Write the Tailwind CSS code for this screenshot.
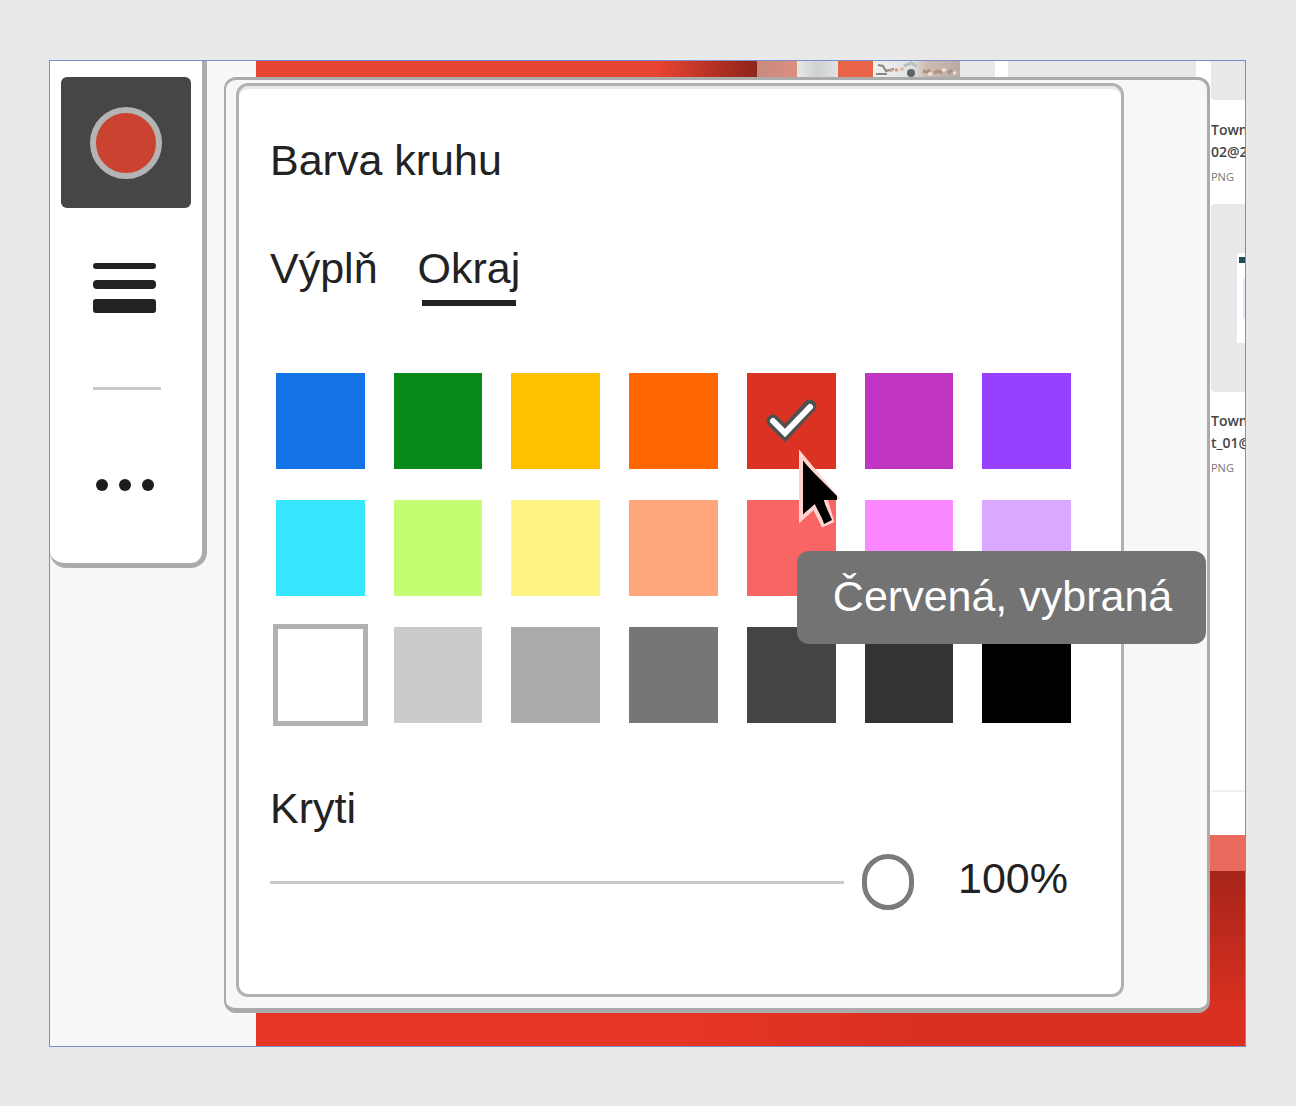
<!DOCTYPE html>
<html lang="cs">
<head>
<meta charset="utf-8">
<meta name="viewport" content="width=device-width, initial-scale=1">
<title>Barva kruhu</title>
<script src="https://cdn.jsdelivr.net/npm/@tailwindcss/browser@4"></script>
</head>
<body class="min-h-screen bg-[#e9e9e9] pt-[60px] pr-[50px] pb-[58px] pl-[49px] font-['Liberation_Sans',Arial,sans-serif] text-[#222]">
<main class="relative border border-[#7b8bcb]">

  <!-- Application window behind the panels -->
  <div class="absolute inset-0 flex overflow-hidden" aria-hidden="true">
    <div class="w-[206px] shrink-0 bg-[#f8f8f8]"></div>
    <div class="flex flex-1 flex-col justify-between bg-linear-to-r from-[#e63524] from-45% to-[#d93021] to-70%">
      <div class="flex h-5">
        <div class="flex-1 bg-linear-to-r from-[#ea4432] from-80% to-[#8e2419]"></div>
        <div class="w-10 bg-linear-to-r from-[#c98a7e] to-[#dd8e80]"></div>
        <div class="w-[41px] bg-linear-to-r from-[#e6e8e8] via-[#cfd2d2] to-[#e2e3e4]"></div>
        <div class="w-[35px] bg-[#ea6547]"></div>
        <svg class="h-5 w-[87px]" viewBox="0 0 87 20" preserveAspectRatio="none">
          <defs><linearGradient id="photo"><stop stop-color="#f1f1ef"/><stop offset=".45" stop-color="#dfe3e3"/><stop offset=".6" stop-color="#cdbcb4"/><stop offset="1" stop-color="#b8aba5"/></linearGradient></defs>
          <path fill="url(#photo)" d="M0 0h87v20H0z"/>
          <path d="M5 4l5 1 3 5 8-2M3 13l11 0" stroke="#8d8783" stroke-width="2" fill="none"/>
          <path d="M17 10l3-2M22 9h3" stroke="#c99c8a" stroke-width="3"/>
          <path d="M31 5l7-3 6 3" stroke="#b9c2c2" stroke-width="3" fill="none"/>
          <circle cx="38" cy="12" r="4" fill="#5b6668"/><circle cx="29" cy="8" r="2" fill="#e8b59c"/>
          <path d="M50 10l4 1 3-2M61 12l4-2 4 2M75 12l4-3" stroke="#b08f7c" stroke-width="3" fill="none"/>
          <path d="M55 13h4M69 9h4M80 12h3" stroke="#f0dfd2" stroke-width="3"/>
        </svg>
        <div class="w-[35px] bg-[#e8e8ea]"></div>
        <div class="w-[13px] bg-white"></div>
        <div class="w-[188px] bg-[#e7e8ea]"></div>
        <div class="w-[13px] bg-white"></div>
      </div>
    </div>
    <div class="-ml-1 flex w-10 shrink-0 flex-col overflow-hidden bg-white font-['Open_Sans',sans-serif] text-sm/[22px] whitespace-nowrap text-[#444]">
      <div class="ml-[6px] h-[39px] shrink-0 rounded-bl bg-[#e7e8ea]"></div>
      <div class="mt-[19px] ml-[6px] h-[85px] shrink-0">
        <p class="font-semibold">Town</p><p class="font-semibold">02@2x</p><p class="mt-1 text-[11px]/[20px] text-[#777]">PNG</p>
      </div>
      <div class="ml-[6px] flex h-[188px] shrink-0 items-center justify-end rounded-l bg-[#e7e8ea]">
        <div class="h-[90px] w-2 bg-white pt-1 pl-[2px]"><div class="h-[6px] bg-[#264a58]"></div><div class="mt-4 ml-1 h-10 bg-[#e5e8f7]"></div></div>
      </div>
      <div class="mt-[18px] ml-[6px] h-[382px] shrink-0 border-b-2 border-[#eeefef]">
        <p class="font-semibold">Town</p><p class="font-semibold">t_01@</p><p class="mt-1 text-[11px]/[20px] text-[#777]">PNG</p>
      </div>
      <div class="h-[43px] shrink-0"></div>
      <div class="h-9 shrink-0 bg-[#e86b5d]"></div>
      <div class="flex-1 bg-linear-to-b from-[#a62519] to-[#da3021] to-80%"></div>
    </div>
  </div>

  <div class="relative flex items-start">
    <!-- Toolbar -->
    <div role="toolbar" aria-label="Nástroje" class="flex w-[157px] shrink-0 flex-col rounded-b-2xl border-r-5 border-b-5 border-[#ababab] bg-white pt-4 pb-[72px] pl-[11px]">
      <button aria-label="Barva" class="flex h-[131px] w-[130px] items-center justify-center rounded-md bg-[#464646]">
        <svg class="size-[72px]" viewBox="0 0 72 72"><circle cx="36" cy="36" r="33" fill="#ca4331" stroke="#b4b4b4" stroke-width="6"/></svg>
      </button>
      <button aria-label="Tloušťka čáry" class="mt-[54px] ml-8 h-[54px] w-[63px]">
        <svg viewBox="0 0 63 54" fill="#222"><rect y="1" width="63" height="6" rx="3"/><rect y="18" width="63" height="9" rx="4"/><rect y="37" width="63" height="14" rx="3"/></svg>
      </button>
      <hr class="mt-[71px] ml-8 w-[68px] border-t-3 border-[#c9c9c9]">
      <button aria-label="Další" class="mt-[89px] ml-[35px] h-3 w-[58px]">
        <svg viewBox="0 0 58 12" fill="#1c1c1c"><circle cx="6" cy="6" r="6"/><circle cx="29" cy="6" r="6"/><circle cx="52" cy="6" r="6"/></svg>
      </button>
    </div>

    <!-- Colour panel -->
    <div class="mt-4 mr-[35px] mb-[33px] ml-[17px] flex-1 rounded-xl border-t-3 border-r-3 border-b-5 border-l-2 border-[#ababab] bg-[#f7f7f7] pt-[3px] pr-[83px] pb-[11px] pl-[10px]">
      <section class="rounded-xl border-3 border-[#b1b1b1] bg-white pt-12 pr-[50px] pb-[84px] pl-[31px] text-[43px]/[52px] shadow-[inset_0_3px_0_#e8e8e8]">
        <h1>Barva kruhu</h1>
        <div role="tablist" class="mt-14 flex h-16 items-start gap-10">
          <button role="tab" aria-selected="false">Výplň</button>
          <button role="tab" aria-selected="true">Okraj<span class="mx-1 mt-[6px] block h-[6px] bg-[#222]"></span></button>
        </div>

        <div role="radiogroup" aria-label="Barva okraje" class="mt-[67px] ml-[6px] grid grid-cols-7 gap-x-[29px] gap-y-[31px]">
          <input type="radio" name="color" aria-label="Modrá" class="block h-24 w-full appearance-none bg-[#1473e6]">
          <input type="radio" name="color" aria-label="Zelená" class="block h-24 w-full appearance-none bg-[#078a1b]">
          <input type="radio" name="color" aria-label="Žlutá" class="block h-24 w-full appearance-none bg-[#ffc000]">
          <input type="radio" name="color" aria-label="Oranžová" class="block h-24 w-full appearance-none bg-[#ff6600]">
          <div class="relative z-10">
            <input type="radio" name="color" checked aria-label="Červená" aria-describedby="tip" class="block h-24 w-full appearance-none bg-[#dc3223]">
            <svg class="pointer-events-none absolute top-[25px] left-[18px] h-[46px] w-[52px]" viewBox="0 0 52 46" fill="none" stroke-linecap="round" stroke-linejoin="miter">
              <path d="M8 23L20 35L45 8" stroke="#505050" stroke-width="13"/><path d="M8 23L20 35L45 9" stroke="#fff" stroke-width="6"/>
            </svg>
            <svg class="pointer-events-none absolute top-[77px] left-[51px] h-[80px] w-[42px]" viewBox="0 0 42 80">
              <path d="M3 5V69L16 57L25 75L34 71L27 47H38Z" fill="#000" stroke="#ffd2d0" stroke-width="4"/>
              <path d="M5 12V64L18 53H20L26 74L34 70L25 50H39V46Z" fill="#000"/>
            </svg>
            <div id="tip" role="tooltip" class="absolute top-[178px] left-[50px] rounded-xl bg-[#737373] pt-[19px] pr-[34px] pb-[22px] pl-9 whitespace-nowrap text-white">Červená, vybraná</div>
          </div>
          <input type="radio" name="color" aria-label="Purpurová" class="block h-24 w-full appearance-none bg-[#c035c3]">
          <input type="radio" name="color" aria-label="Fialová" class="block h-24 w-full appearance-none bg-[#9541ff]">

          <input type="radio" name="color" aria-label="Azurová" class="block h-24 w-full appearance-none bg-[#37e6ff]">
          <input type="radio" name="color" aria-label="Světle zelená" class="block h-24 w-full appearance-none bg-[#c4fc72]">
          <input type="radio" name="color" aria-label="Světle žlutá" class="block h-24 w-full appearance-none bg-[#fff484]">
          <input type="radio" name="color" aria-label="Světle oranžová" class="block h-24 w-full appearance-none bg-[#ffa77a]">
          <input type="radio" name="color" aria-label="Světle červená" class="block h-24 w-full appearance-none bg-[#f96465]">
          <input type="radio" name="color" aria-label="Růžová" class="block h-24 w-full appearance-none bg-[#fc88ff]">
          <input type="radio" name="color" aria-label="Světle fialová" class="block h-24 w-full appearance-none bg-[#daa8ff]">

          <input type="radio" name="color" aria-label="Bílá" class="block h-24 w-full appearance-none bg-white outline-5 -outline-offset-2 outline-[#b1b1b1]">
          <input type="radio" name="color" aria-label="Šedá 1" class="block h-24 w-full appearance-none bg-[#cbcbcb]">
          <input type="radio" name="color" aria-label="Šedá 2" class="block h-24 w-full appearance-none bg-[#aaaaaa]">
          <input type="radio" name="color" aria-label="Šedá 3" class="block h-24 w-full appearance-none bg-[#767676]">
          <input type="radio" name="color" aria-label="Šedá 4" class="block h-24 w-full appearance-none bg-[#444444]">
          <input type="radio" name="color" aria-label="Šedá 5" class="block h-24 w-full appearance-none bg-[#333333]">
          <input type="radio" name="color" aria-label="Černá" class="block h-24 w-full appearance-none bg-black">
        </div>

        <label for="opacity" class="mt-[59px] block">Kryti</label>
        <div class="mt-5 flex items-start gap-11">
          <input id="opacity" type="range" min="0" max="100" value="100" class="h-14 min-w-0 flex-1 appearance-none overflow-hidden bg-[linear-gradient(#c8c8c8,#c8c8c8)] bg-[length:100%_3px] bg-center bg-no-repeat [&::-webkit-slider-thumb]:h-14 [&::-webkit-slider-thumb]:w-[52px] [&::-webkit-slider-thumb]:appearance-none [&::-webkit-slider-thumb]:rounded-full [&::-webkit-slider-thumb]:border-5 [&::-webkit-slider-thumb]:border-[#7b7b7b] [&::-webkit-slider-thumb]:bg-white [&::-webkit-slider-thumb]:shadow-[0_0_0_18px_white]">
          <output for="opacity" class="w-[113px] text-[43px]/[48px]">100%</output>
        </div>
      </section>
    </div>
  </div>
</main>
</body>
</html>
